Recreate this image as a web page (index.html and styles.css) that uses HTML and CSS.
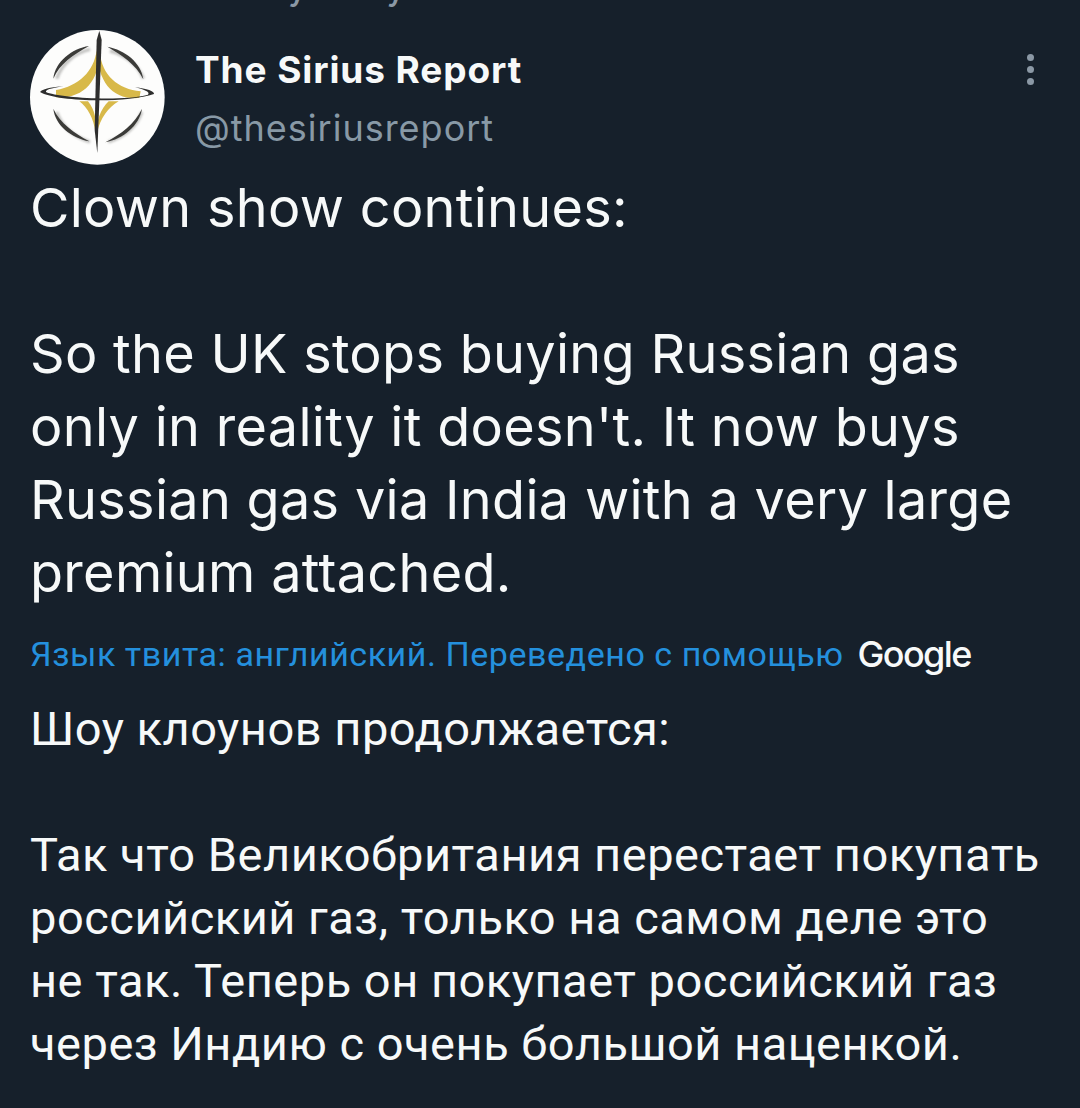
FILE: index.html
```html
<!DOCTYPE html>
<html lang="ru">
<head>
<meta charset="utf-8">
<title>The Sirius Report</title>
<link rel="stylesheet" href="styles.css">
</head>
<body>
<main class="tweet">
  <div class="clipped"><span class="clipped-text">y</span><span class="clipped-text">y</span></div>
  <header class="head">
    <svg class="avatar" viewBox="30 30 405 405" aria-hidden="true">
      <defs>
        <filter id="soft" x="-20%" y="-20%" width="140%" height="140%"><feGaussianBlur stdDeviation="3"/></filter>
        <filter id="fine" x="-5%" y="-5%" width="110%" height="110%"><feGaussianBlur stdDeviation="1.1"/></filter>
      </defs>
      <circle cx="232" cy="232" r="202" fill="#fdfdfc"/>
      <g fill="none" stroke="#8a8a88" stroke-width="10" opacity=".5" filter="url(#soft)" transform="translate(5 6)">
        <path d="M205 82C160 92 120 125 105 170M265 87C310 97 350 130 365 170M105 270C120 315 160 345 205 360M360 270C345 315 305 345 260 360"/>
      </g>
      <g filter="url(#fine)">
        <g fill="#3a3a38">
          <path d="M207 78C155 86 106 125 100 176C118 132 160 104 207 78Z"/>
          <path d="M262 80C315 90 364 128 370 178C348 132 305 106 262 80Z"/>
          <path d="M100 266C106 317 155 354 208 364C162 338 120 310 100 266Z"/>
          <path d="M366 266C358 317 310 356 256 367C303 342 344 312 366 266Z"/>
        </g>
        <g fill="#d8b94a">
          <path d="M230 90C222 155 176 198 108 210L108 232C192 236 236 185 240 96C244 165 295 208 362 214L358 234C278 240 235 190 230 90Z"/>
          <path d="M178 244C203 262 220 295 227 337C232 305 224 268 204 244Z"/>
          <path d="M296 244C264 262 242 295 231 337C228 305 242 266 266 244Z"/>
        </g>
        <path d="M60 216C70 204 110 200 130 199C90 205 76 210 78 216C110 232 300 246 384 224C392 216 370 208 345 202C380 206 404 214 402 222C320 250 110 246 60 216Z" fill="#2f2f2d"/>
        <path d="M238 32L245 60 232 400 224 330 230 60Z" fill="#2f2f2d"/>
      </g>
    </svg>
    <div class="identity">
      <div class="name">The Sirius Report</div>
      <div class="handle">@thesiriusreport</div>
    </div>
    <div class="more" aria-hidden="true"><i></i><i></i><i></i></div>
  </header>
  <p class="original">Clown show continues:<br><br>So the UK stops buying Russian gas<br>only in reality it doesn't. It now buys<br>Russian gas via India with a very large<br>premium attached.</p>
  <div class="notice">
    <span class="notice-text">Язык твита: английский. Переведено с помощью</span>
    <span class="google">Google</span>
  </div>
  <p class="translated">Шоу клоунов продолжается:<br><br>Так что Великобритания перестает покупать<br>российский газ, только на самом деле это<br>не так. Теперь он покупает российский газ<br>через Индию с очень большой наценкой.</p>
</main>
</body>
</html>
```
FILE: styles.css
```css
html, body {
  margin: 0;
  padding: 0;
  background: #16202b;
}
.tweet {
  width: 1080px;
  height: 1108px;
  overflow: hidden;
  box-sizing: border-box;
  font-family: Inter, "Noto Sans", sans-serif;
  color: #f7f9f9;
}
.clipped {
  height: 30px;
  overflow: hidden;
  display: flex;
  padding-left: 288px;
  gap: 80px;
  color: #8b98a5;
  font-size: 32px;
  font-weight: 500;
}
.clipped-text {
  display: block;
  line-height: 30px;
  height: 30px;
  margin-top: -26px;
}
.head {
  display: flex;
  align-items: flex-start;
  padding-left: 30px;
  padding-right: 46px;
}
.avatar {
  width: 135px;
  height: 135px;
  flex: none;
}
.identity {
  flex: 1;
  margin-left: 30px;
  padding-top: 16px;
}
.name {
  font-size: 37px;
  font-weight: 700;
  line-height: 48px;
  letter-spacing: 0.9px;
}
.handle {
  font-size: 36px;
  line-height: 48px;
  margin-top: 10px;
  letter-spacing: 1px;
  color: #8899a6;
}
.more {
  display: flex;
  flex-direction: column;
  gap: 5px;
  padding-top: 24px;
}
.more i {
  display: block;
  width: 7px;
  height: 7px;
  border-radius: 50%;
  background: #8b98a5;
}
.original {
  margin: 6px 0 0;
  padding-left: 30px;
  font-size: 54px;
  line-height: 73px;
  letter-spacing: 0.3px;
}
.notice {
  display: flex;
  align-items: center;
  gap: 14px;
  margin-top: 21px;
  padding-left: 30px;
  height: 48px;
}
.notice-text {
  font-family: Roboto, sans-serif;
  font-size: 34px;
  letter-spacing: 0.55px;
  color: #2490dd;
}
.google {
  font-size: 36px;
  font-weight: 500;
  letter-spacing: -1.6px;
}
.translated {
  margin: 19px 0 0;
  padding-left: 30px;
  font-family: Roboto, sans-serif;
  font-size: 47px;
  letter-spacing: 0.5px;
  line-height: 63px;
}
```
